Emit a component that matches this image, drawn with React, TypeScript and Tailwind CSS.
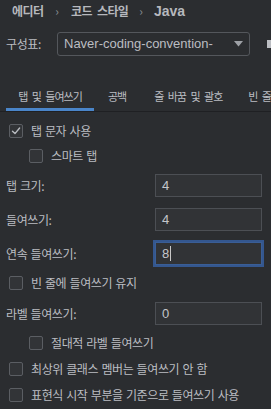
import React from "react"

const font = { fontFamily: '"Noto Sans CJK KR", "Noto Sans", sans-serif' }
const latin = { fontFamily: '"Liberation Sans", sans-serif' }

function Check({ checked = false }: { checked?: boolean }) {
  return (
    <span className="w-[14px] h-[14px] shrink-0 rounded-[2px] border border-[#5b5e63] bg-[#323437] flex items-center justify-center">
      {checked && (
        <svg width="10" height="10" viewBox="0 0 10 10" fill="none">
          <path d="M1.5 5.2 L4 7.6 L8.6 2" stroke="#b9bcc1" strokeWidth="1.4" strokeLinecap="round" strokeLinejoin="round" />
        </svg>
      )}
    </span>
  )
}

function CheckRow({ label, checked, indent }: { label: string; checked?: boolean; indent?: boolean }) {
  return (
    <div className={`flex items-center gap-2 h-[14px] ${indent ? "pl-[29px]" : "pl-[9px]"}`}>
      <Check checked={checked} />
      <span className="text-[12px] leading-none tracking-[-0.4px] [word-spacing:1px]">{label}</span>
    </div>
  )
}

function Field({ label, value, focused }: { label: string; value: string; focused?: boolean }) {
  return (
    <div className="flex items-center justify-between pl-[6px] pr-[9px]">
      <span className="text-[12px] tracking-[-0.4px] [word-spacing:1px]">{label}</span>
      <div
        className={`w-[107px] h-[23px] flex items-center pl-[6px] text-[13px] bg-[#313336] text-[#c4c6ca] ${
          focused ? "outline-2 outline-[#34578f] border border-[#3a5e96]" : "border border-[#4c4f54]"
        }`}
        style={latin}
      >
        {value}
        {focused && <span className="w-px h-[15px] bg-[#c8c8c8] ml-px" />}
      </div>
    </div>
  )
}

export default function App() {
  return (
    <div className="w-[271px] h-[409px] overflow-hidden bg-[#2b2d30] text-[#bbbdc2]" style={font}>
      {/* Breadcrumb */}
      <div className="flex items-center h-[22px] pl-[12px] text-[12px] font-bold text-[#b6b8bd] whitespace-nowrap">
        <span className="tracking-[-0.6px]">에디터</span>
        <span className="mx-[12px] text-[#8a8d92] font-normal">›</span>
        <span className="tracking-[-0.6px] [word-spacing:3px]">코드 스타일</span>
        <span className="mx-[11px] text-[#8a8d92] font-normal">›</span>
        <span className="text-[14px]" style={latin}>Java</span>
      </div>

      {/* Scheme */}
      <div className="flex items-center mt-[10px] pl-[6px] h-[24px]">
        <span className="text-[12px] w-[51px] tracking-[-0.4px]">구성표:</span>
        <div
          className="w-[193px] h-[24px] border border-[#54575c] rounded-[3px] flex items-center justify-between pl-[6px] pr-[6px] text-[13px]"
          style={latin}
        >
          <span>Naver-coding-convention-</span>
          <svg width="9" height="6" viewBox="0 0 9 6">
            <path d="M0 0 H9 L4.5 5.5 Z" fill="#9ea1a6" />
          </svg>
        </div>
        <span className="ml-[17px] w-[4px] h-[8px] bg-[#bbbdc2]" />
      </div>

      {/* Tabs */}
      <div className="mt-[35px] flex items-end border-b border-[#1f2023] text-[11px] tracking-[-1px] [word-spacing:3px] whitespace-nowrap">
        <div className="ml-[6px] w-[92px] flex flex-col items-center">
          <span className="leading-none pb-[6px]">탭 및 들여쓰기</span>
          <span className="w-full h-[3px] bg-[#4a85c9]" />
        </div>
        <span className="ml-[14px] leading-none pb-[9px]">공백</span>
        <span className="ml-[28px] leading-none pb-[9px]">줄 바꿈 및 괄호</span>
        <span className="ml-[26px] leading-none pb-[9px]">빈 줄</span>
      </div>

      {/* Options */}
      <div className="flex flex-col mt-[12px]">
        <CheckRow label="탭 문자 사용" checked />
        <div className="mt-[11px]">
          <CheckRow label="스마트 탭" indent />
        </div>
        <div className="mt-[11px]">
          <Field label="탭 크기:" value="4" />
        </div>
        <div className="mt-[11px]">
          <Field label="들여쓰기:" value="4" />
        </div>
        <div className="mt-[11px]">
          <Field label="연속 들여쓰기:" value="8" focused />
        </div>
        <div className="mt-[11px]">
          <CheckRow label="빈 줄에 들여쓰기 유지" />
        </div>
        <div className="mt-[12px]">
          <Field label="라벨 들여쓰기:" value="0" />
        </div>
        <div className="mt-[11px]">
          <CheckRow label="절대적 라벨 들여쓰기" indent />
        </div>
        <div className="mt-[12px]">
          <CheckRow label="최상위 클래스 멤버는 들여쓰기 안 함" />
        </div>
        <div className="mt-[12px]">
          <CheckRow label="표현식 시작 부분을 기준으로 들여쓰기 사용" />
        </div>
      </div>
    </div>
  )
}
